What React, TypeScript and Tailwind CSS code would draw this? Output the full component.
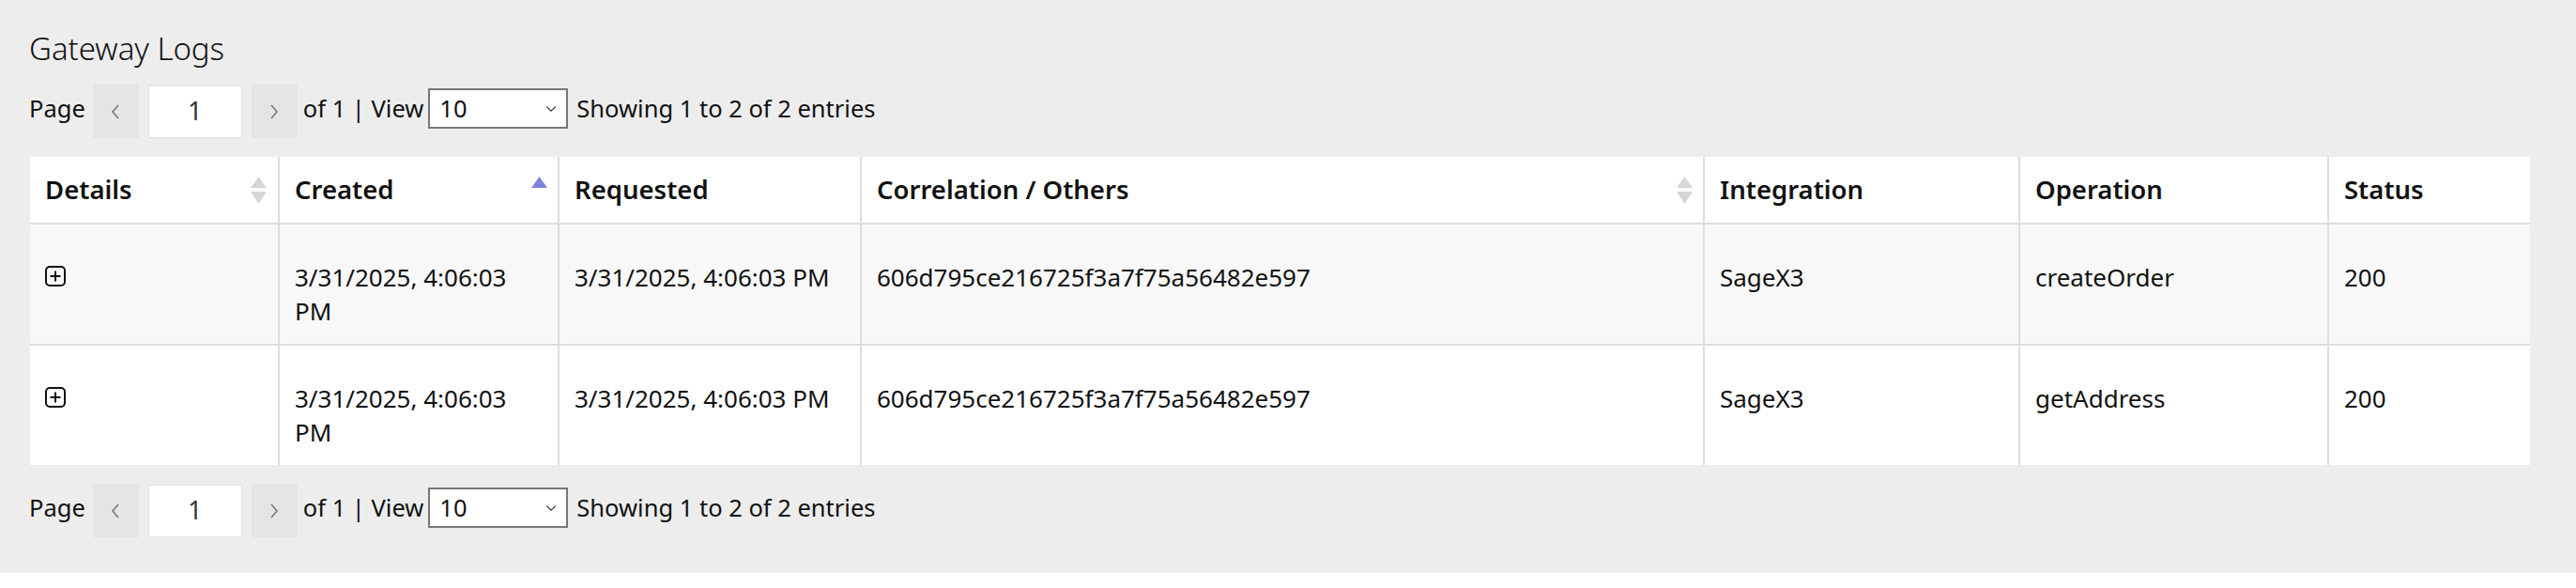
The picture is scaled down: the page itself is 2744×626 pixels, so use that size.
import { ChevronDown } from 'lucide-react';

const rows = [
  { created: '3/31/2025, 4:06:03 PM', requested: '3/31/2025, 4:06:03 PM', correlation: '606d795ce216725f3a7f75a56482e597', integration: 'SageX3', operation: 'createOrder', status: '200' },
  { created: '3/31/2025, 4:06:03 PM', requested: '3/31/2025, 4:06:03 PM', correlation: '606d795ce216725f3a7f75a56482e597', integration: 'SageX3', operation: 'getAddress', status: '200' },
];

function SortIcon({ active }: { active?: boolean }) {
  return (
    <svg width="17" height="29" viewBox="0 0 17 29" className="shrink-0">
      <path d="M8.5 0 L17 12 L0 12 Z" fill={active ? '#7d82dc' : '#d6d6d6'} />
      {!active && <path d="M0 16 L17 16 L8.5 29 Z" fill="#d6d6d6" />}
    </svg>
  );
}

function PlusBox() {
  return (
    <svg width="22" height="22" viewBox="0 0 22 22" className="block">
      <rect x="1" y="1" width="20" height="20" rx="4" fill="none" stroke="#111" strokeWidth="2" />
      <path d="M11 5.5 V16.5 M5.5 11 H16.5" stroke="#111" strokeWidth="2" />
    </svg>
  );
}

function Chevron({ dir }: { dir: 'left' | 'right' }) {
  return (
    <svg width="10" height="16" viewBox="0 0 10 16">
      <path d={dir === 'left' ? 'M8 1 L2 8 L8 15' : 'M2 1 L8 8 L2 15'} fill="none" stroke="#7a7a7a" strokeWidth="1.6" />
    </svg>
  );
}

function Pager() {
  return (
    <div className="flex items-center h-[57px] text-[25.5px] text-[#111]">
      <span className="mb-[7px] mr-[8px]">Page</span>
      <button className="w-[49px] h-[57px] bg-[#e5e5e5] flex items-center justify-center">
        <Chevron dir="left" />
      </button>
      <div className="ml-[10px] w-[100px] h-[56px] bg-white border border-[#e2e2e2] flex items-center justify-center text-[27px] text-[#333]">1</div>
      <button className="ml-[10px] w-[49px] h-[57px] bg-[#e5e5e5] flex items-center justify-center">
        <Chevron dir="right" />
      </button>
      <span className="mb-[7px] ml-[6px]">of 1 | View</span>
      <div className="ml-[5px] w-[149px] h-[43px] mb-[6px] bg-white border-2 border-[#777] flex items-center justify-between pl-[10px] pr-[7px]">
        <span>10</span>
        <ChevronDown className="w-[18px] h-[18px] text-[#444]" strokeWidth={1.5} />
      </div>
      <span className="mb-[7px] ml-[9px]">Showing 1 to 2 of 2 entries</span>
    </div>
  );
}

export default function App() {
  const th = 'border-l-2 border-[#dddddd] px-[16px] py-[17px] text-left text-[27.5px] font-semibold align-middle';
  const td = 'border-l-2 border-[#dddddd] px-[16px] pt-[38px] pb-[17px] align-top font-normal';
  return (
    <div className="bg-white min-h-screen" style={{ fontFamily: '"Noto Sans", "Open Sans", sans-serif' }}>
      <div className="bg-[#ededed] pl-[31px] pr-[49px] pt-[31px] pb-[38px]">
        <h1 className="text-[33px] leading-[42px] font-light text-[#111]">Gateway Logs</h1>
        <div className="mt-[17px]">
          <Pager />
        </div>
        <table className="mt-[20px] ml-px table-fixed w-[2663px] border-collapse text-[26px] leading-[36px] text-[#111]">
          <thead>
            <tr className="bg-white border-b-2 border-[#dddddd]">
              <th className="w-[265px] pl-[16px] pr-[12px] py-[17px] text-left text-[27.5px] font-semibold">
                <div className="flex items-center justify-between">
                  <span>Details</span>
                  <SortIcon />
                </div>
              </th>
              <th className={`${th} w-[298px] pr-[11px]`}>
                <div className="flex items-center justify-between">
                  <span>Created</span>
                  <SortIcon active />
                </div>
              </th>
              <th className={`${th} w-[322px]`}>Requested</th>
              <th className={`${th} w-[898px] pr-[11px]`}>
                <div className="flex items-center justify-between">
                  <span>Correlation / Others</span>
                  <SortIcon />
                </div>
              </th>
              <th className={`${th} w-[336px]`}>Integration</th>
              <th className={`${th} w-[329px]`}>Operation</th>
              <th className={`${th} w-[215px]`}>Status</th>
            </tr>
          </thead>
          <tbody>
            {rows.map((r, i) => (
              <tr key={i} className={i === 0 ? 'bg-[#f8f8f8] border-b-2 border-[#dddddd]' : 'bg-white'}>
                <td className="px-[16px] pt-[44px] pb-[17px] align-top">
                  <div className="h-[30px]">
                    <PlusBox />
                  </div>
                </td>
                <td className={td}>{r.created}</td>
                <td className={td}>{r.requested}</td>
                <td className={td}>{r.correlation}</td>
                <td className={td}>{r.integration}</td>
                <td className={td}>{r.operation}</td>
                <td className={td}>{r.status}</td>
              </tr>
            ))}
          </tbody>
        </table>
        <div className="mt-[20px]">
          <Pager />
        </div>
      </div>
    </div>
  );
}
